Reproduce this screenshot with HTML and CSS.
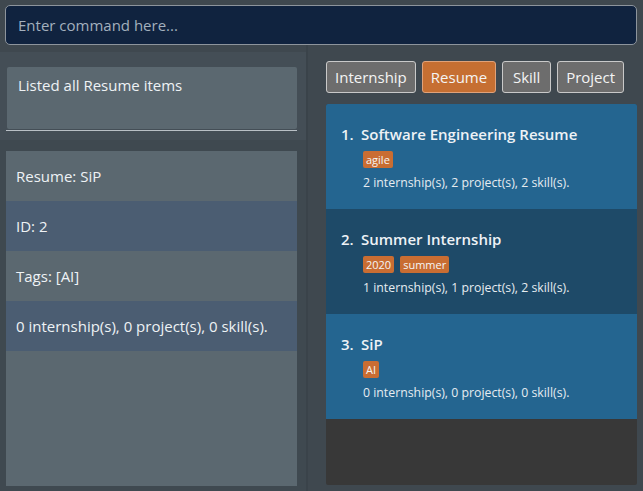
FILE: index.html
```html
<!DOCTYPE html>
<html>
<head>
<meta charset="utf-8">
<link rel="stylesheet" href="styles.css">
</head>
<body>
<div class="cmd">Enter command here...</div>
<div class="main">
  <div class="left">
    <div class="result-wrap">
      <div class="result">Listed all Resume items</div>
      <div class="result-line"></div>
    </div>
    <div class="detail-wrap">
      <div class="detail">
        <div class="row a">Resume: SiP</div>
        <div class="row b">ID: 2</div>
        <div class="row a">Tags: [AI]</div>
        <div class="row b">0 internship(s), 0 project(s), 0 skill(s).</div>
      </div>
    </div>
  </div>
  <div class="right">
    <div class="tabs">
      <div class="tab">Internship</div>
      <div class="tab active">Resume</div>
      <div class="tab">Skill</div>
      <div class="tab">Project</div>
    </div>
    <div class="list">
      <div class="card odd">
        <div class="title"><span class="num">1.</span>Software Engineering Resume</div>
        <div class="tags"><span class="tag">agile</span></div>
        <div class="info">2 internship(s), 2 project(s), 2 skill(s).</div>
      </div>
      <div class="card even">
        <div class="title"><span class="num">2.</span>Summer Internship</div>
        <div class="tags"><span class="tag">2020</span><span class="tag">summer</span></div>
        <div class="info">1 internship(s), 1 project(s), 2 skill(s).</div>
      </div>
      <div class="card odd">
        <div class="title"><span class="num">3.</span>SiP</div>
        <div class="tags"><span class="tag">AI</span></div>
        <div class="info">0 internship(s), 0 project(s), 0 skill(s).</div>
      </div>
    </div>
  </div>
</div>
</body>
</html>
```
FILE: styles.css
```css
html, body {
  margin: 0;
  height: 100%;
}
body {
  background: #3f484f;
  font-family: "Open Sans", "Noto Sans", sans-serif;
  color: #eef2f5;
  overflow: hidden;
}
.cmd {
  margin: 5px 6px 0 5px;
  box-sizing: border-box;
  height: 40px;
  border: 1px solid #8d949c;
  border-radius: 5px;
  background: #10233f;
  color: #a3b0bd;
  font-size: 15px;
  line-height: 38px;
  padding-left: 12px;
}
.main {
  display: grid;
  grid-template-columns: 308px 1fr;
  height: 446px;
}
.left {
  display: flex;
  flex-direction: column;
  border-right: 2px solid #3a434a;
}
.result-wrap {
  background: #444e56;
  margin-top: 7px;
  padding: 15px 9px 0 6px;
  height: 88px;
  box-sizing: border-box;
}
.result {
  margin-left: 1px;
  height: 62px;
  background: #5b6870;
  border-radius: 2px;
  font-size: 15px;
  padding: 8px 11px;
  box-sizing: border-box;
}
.result-line {
  margin-top: 1px;
  height: 1px;
  background: #b9c0c6;
}
.detail-wrap {
  flex: 1;
  padding: 11px 9px 5px 6px;
  background: #3f4950;
  display: flex;
}
.detail {
  flex: 1;
  background: #5b6870;
}
.row {
  height: 50px;
  line-height: 50px;
  padding-left: 10px;
  font-size: 15px;
}
.row.b {
  background: #4b5d72;
}
.right {
  padding: 16px 6px 6px 18px;
  display: flex;
  flex-direction: column;
}
.tabs {
  display: flex;
  gap: 6px;
  height: 32px;
}
.tab {
  box-sizing: border-box;
  min-width: 49px;
  text-align: center;
  background: #6d6d6d;
  border: 1px solid #c9c9c9;
  border-radius: 3px;
  font-size: 15px;
  line-height: 30px;
  padding: 0 8px;
  color: #f4f4f4;
}
.tab.active {
  background: #c66f32;
  border-color: #e0a27a;
}
.list {
  margin-top: 11px;
  flex: 1;
  background: #383838;
  border-radius: 2px;
  overflow: hidden;
}
.card {
  height: 105px;
  box-sizing: border-box;
  padding: 20px 15px 0 15px;
}
.card.odd { background: #246590; }
.card.even { background: #1e4a68; }
.title {
  font-size: 15px;
  font-weight: 600;
  color: #eef2f6;
  line-height: 20px;
}
.num {
  display: inline-block;
  width: 20px;
}
.tags {
  margin-top: 7px;
  margin-left: 22px;
  display: flex;
  gap: 6px;
  height: 17px;
}
.tag {
  background: #c96d32;
  border-radius: 2px;
  font-size: 11px;
  line-height: 17px;
  padding: 0 3px;
  color: #f5f5f5;
}
.info {
  margin-top: 6px;
  margin-left: 22px;
  font-size: 12.3px;
  color: #e6ecf0;
}
```
